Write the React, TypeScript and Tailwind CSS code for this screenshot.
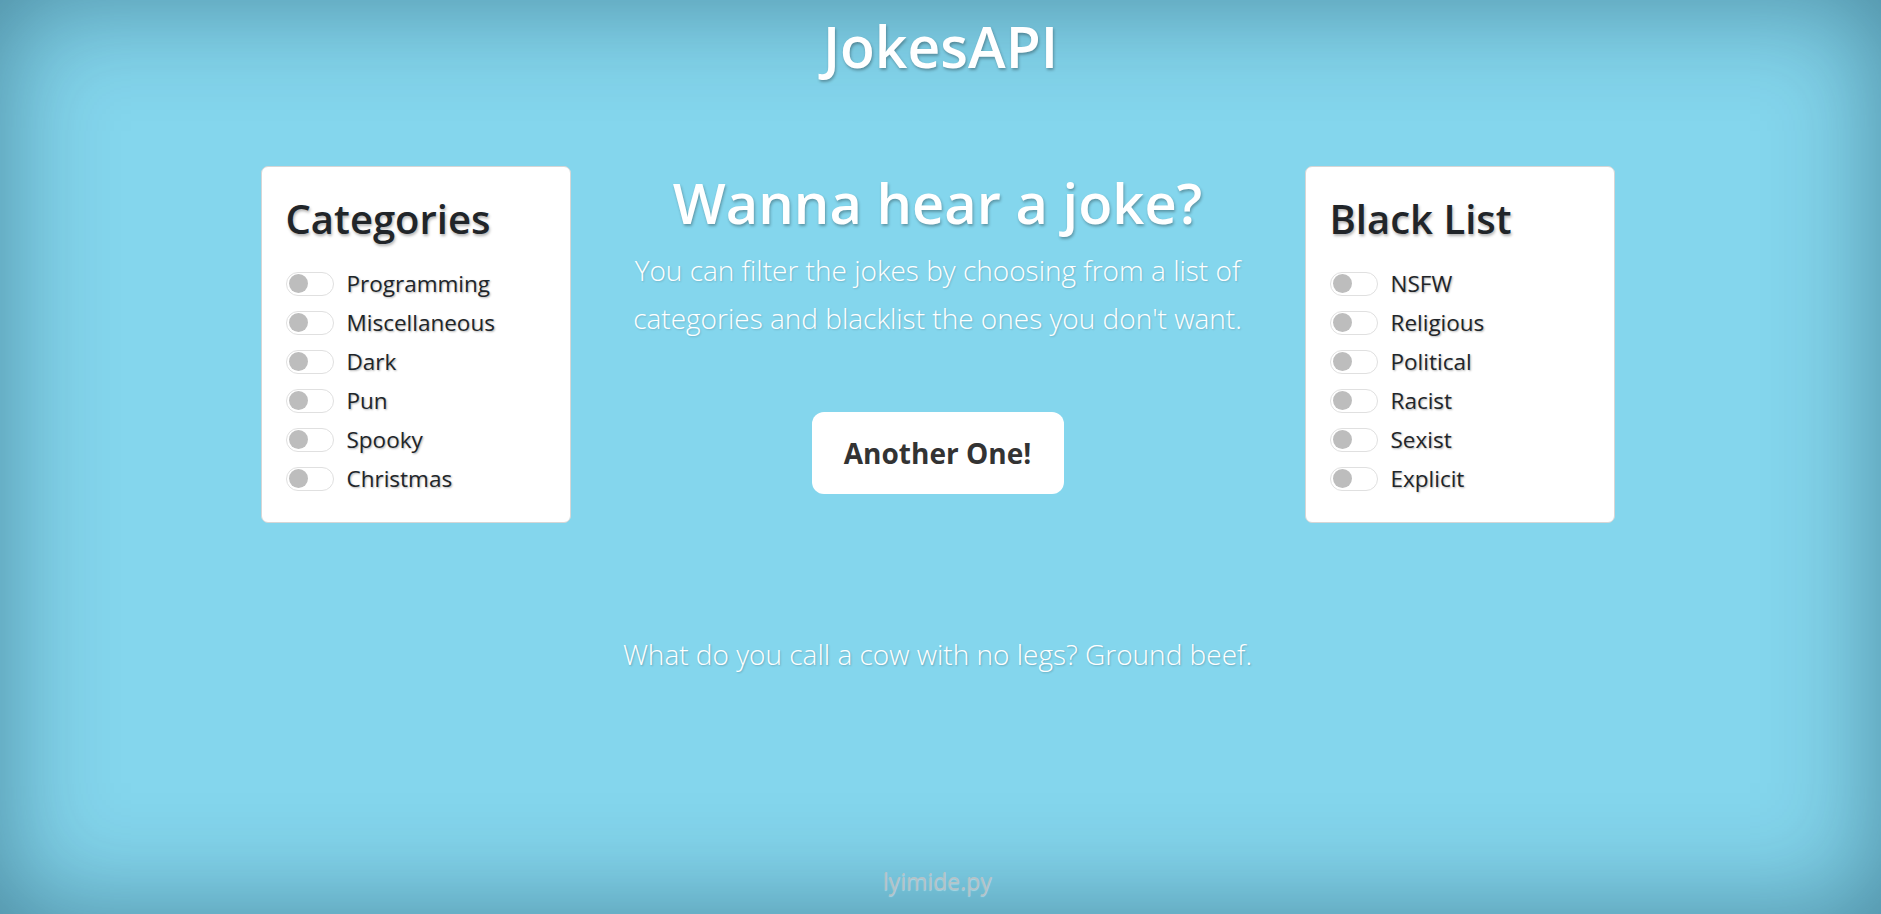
import { useState } from 'react';

const categories = ['Programming', 'Miscellaneous', 'Dark', 'Pun', 'Spooky', 'Christmas'];
const blacklist = ['NSFW', 'Religious', 'Political', 'Racist', 'Sexist', 'Explicit'];

function Toggle({ label }: { label: string }) {
  const [on, setOn] = useState(false);
  return (
    <label className="flex items-center gap-[13px] h-[39px] cursor-pointer" onClick={() => setOn(!on)}>
      <span
        className={`flex items-center w-[48px] h-[24px] rounded-full border border-[#e0e0e0] px-[2px] ${
          on ? 'bg-[#84d6ed] justify-end' : 'bg-white justify-start'
        }`}
      >
        <span className={`w-[19px] h-[19px] rounded-full ${on ? 'bg-white' : 'bg-[#bdbdbd]'}`} />
      </span>
      <span className="text-[22.5px] text-[#212529] [text-shadow:1px_1px_2px_rgba(0,0,0,0.3)]">{label}</span>
    </label>
  );
}

function Panel({ title, items }: { title: string; items: string[] }) {
  return (
    <div className="w-[310px] h-[357px] bg-white rounded-[7px] border border-[#d6d6d6] pl-[24px] pt-[28px]">
      <h2 className="text-[40px] font-semibold text-[#212529] leading-[1.2] mb-[21px] [text-shadow:1px_2px_3px_rgba(0,0,0,0.3)]">
        {title}
      </h2>
      <div className="flex flex-col">
        {items.map((item) => (
          <Toggle key={item} label={item} />
        ))}
      </div>
    </div>
  );
}

export default function App() {
  return (
    <div
      className="w-full h-[914px] overflow-hidden bg-[#84d6ed] shadow-[inset_0_0_110px_rgba(0,40,60,0.45)] flex flex-col items-center"
      style={{ fontFamily: '"Open Sans", "Noto Sans", sans-serif' }}
    >
      <h1 className="mt-[9px] text-[57px] font-semibold text-white leading-[1.3] [text-shadow:1px_2px_3px_rgba(0,0,0,0.3)]">
        JokesAPI
      </h1>

      <div className="mt-[83px] pr-[6px] flex">
        <Panel title="Categories" items={categories} />

        <div className="w-[734px] flex flex-col items-center">
          <h2 className="mt-[3px] text-[56px] font-semibold text-white leading-[1.2] [text-shadow:1px_2px_3px_rgba(0,0,0,0.3)]">
            Wanna hear a joke?
          </h2>
          <p className="mt-[10px] w-[660px] text-center text-[28px] font-light text-white leading-[48px] [text-shadow:1px_1px_2px_rgba(0,0,0,0.15)]">
            You can filter the jokes by choosing from a list of categories and blacklist the ones you don't want.
          </p>
          <button className="mt-[70px] w-[252px] h-[82px] bg-white rounded-[12px] text-[28px] font-bold text-[#333]">
            Another One!
          </button>
        </div>

        <Panel title="Black List" items={blacklist} />
      </div>

      <p className="mt-[110px] pr-[6px] text-[28px] font-light text-white [text-shadow:1px_1px_2px_rgba(0,0,0,0.2)]">
        What do you call a cow with no legs? Ground beef.
      </p>

      <div className="mt-auto mb-[16px] pr-[6px] text-[23px] text-[#b5c3c8] [text-shadow:0_1px_1px_rgba(255,255,255,0.4)]">
        lyimide.py
      </div>
    </div>
  );
}
